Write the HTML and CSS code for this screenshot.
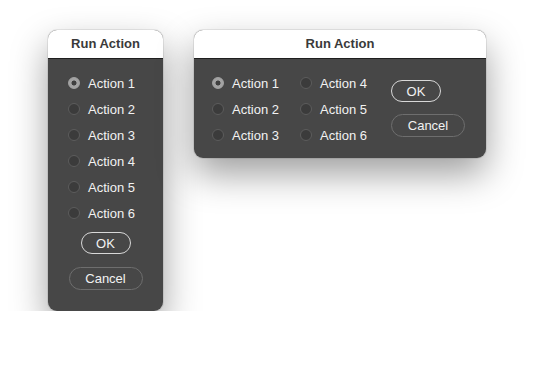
FILE: index.html
```html
<!DOCTYPE html>
<html lang="en">
<head>
    <meta charset="UTF-8">
    <title>Run Action</title>
    <link rel="stylesheet" href="styles.css">
</head>
<body>
    <div class="desk">
        <div class="dialog tall">
            <div class="title">Run Action</div>
            <div class="panel">
                <div class="options">
                    <label class="opt"><span class="radio on"></span>Action 1</label>
                    <label class="opt"><span class="radio"></span>Action 2</label>
                    <label class="opt"><span class="radio"></span>Action 3</label>
                    <label class="opt"><span class="radio"></span>Action 4</label>
                    <label class="opt"><span class="radio"></span>Action 5</label>
                    <label class="opt"><span class="radio"></span>Action 6</label>
                </div>
                <div class="buttons">
                    <button class="btn ok">OK</button>
                    <button class="btn cancel">Cancel</button>
                </div>
            </div>
        </div>

        <div class="dialog wide">
            <div class="title">Run Action</div>
            <div class="panel">
                <div class="options">
                    <label class="opt"><span class="radio on"></span>Action 1</label>
                    <label class="opt"><span class="radio"></span>Action 2</label>
                    <label class="opt"><span class="radio"></span>Action 3</label>
                    <label class="opt"><span class="radio"></span>Action 4</label>
                    <label class="opt"><span class="radio"></span>Action 5</label>
                    <label class="opt"><span class="radio"></span>Action 6</label>
                </div>
                <div class="buttons">
                    <button class="btn ok">OK</button>
                    <button class="btn cancel">Cancel</button>
                </div>
            </div>
        </div>
    </div>
</body>
</html>
```

FILE: styles.css
```css
body {
    margin: 0;
    background: #ffffff;
    font-family: "Liberation Sans", Arial, sans-serif;
    font-size: 13px;
}
.desk {
    display: flex;
    align-items: flex-start;
    gap: 31px;
    padding: 30px 0 0 48px;
}
.dialog {
    border-radius: 9px;
    overflow: hidden;
    background: #474747;
    box-shadow: 0 0 0 1px rgba(0,0,0,0.08), 0 16px 36px rgba(0,0,0,0.38);
}
.title {
    height: 28px;
    line-height: 28px;
    background: #ffffff;
    color: #3a3a3a;
    font-weight: bold;
    text-align: center;
    border-bottom: 1px solid #1f1f1f;
}
.opt {
    display: flex;
    align-items: center;
    height: 26px;
    color: #f2f2f2;
}
.radio {
    width: 10px;
    height: 10px;
    border-radius: 50%;
    border: 1px solid #5c5c5c;
    background: #3b3b3b;
    margin-right: 8px;
    flex-shrink: 0;
}
.radio.on {
    border-color: #a3a3a3;
    background: radial-gradient(circle, #3f3f3f 0 2.2px, #a3a3a3 2.8px);
}
.btn {
    font-family: inherit;
    font-size: 13px;
    color: #f2f2f2;
    background: #474747;
    border-radius: 12px;
    padding: 0;
}
.ok {
    width: 50px;
    height: 22px;
    border: 1px solid #d8d8d8;
}
.cancel {
    width: 74px;
    height: 23px;
    border: 1px solid #6e6e6e;
}

/* tall dialog */
.tall {
    width: 115px;
}
.tall .panel {
    padding: 11px 0 21px 20px;
}
.tall .buttons {
    display: flex;
    flex-direction: column;
    align-items: center;
    gap: 13px;
    margin: 6px 0 0 -20px;
}

/* wide dialog */
.wide {
    width: 292px;
}
.wide .panel {
    display: flex;
    align-items: flex-start;
    padding: 11px 0 10px 18px;
}
.wide .options {
    display: grid;
    grid-template-rows: repeat(3, 26px);
    grid-auto-flow: column;
    grid-template-columns: 88px 91px;
}
.wide .buttons {
    display: flex;
    flex-direction: column;
    align-items: flex-start;
    gap: 12px;
    padding-top: 10px;
}
```
